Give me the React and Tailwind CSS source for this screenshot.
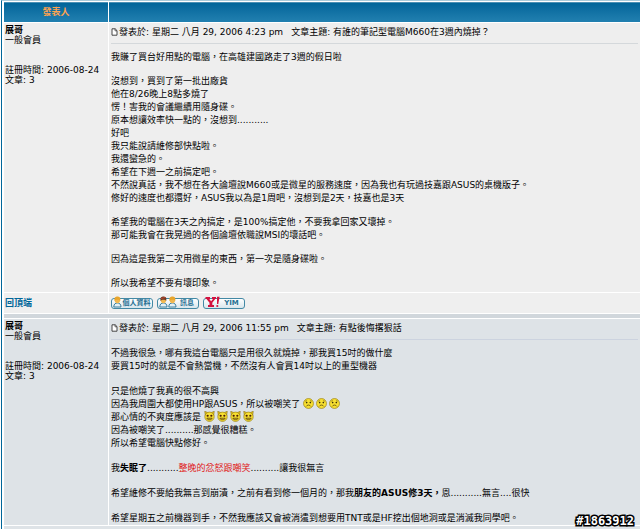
import React from 'react';

const posts = [
    {
        author: '展哥',
        rank: '一般會員',
        joined: '2006-08-24',
        count: 3,
        date: '星期二 八月 29, 2006 4:23 pm',
        subject: '有誰的筆記型電腦M660在3週內燒掉？',
        shade: 'bg-[#eeeeee]',
        rule: 'border-[#d4d8db]',
        gap: 'gap-[11px] pb-[2px]',
        body: [
            ['我賺了買台好用點的電腦，在高雄建國路走了3週的假日啦'],
            [
                '沒想到，買到了第一批出廠貨',
                '他在8/26晚上8點多燒了',
                '愣！害我的會議繼續用隨身碟。',
                '原本想讓效率快一點的，沒想到...........',
                '好吧',
                '我只能說請維修部快點啦。',
                '我還蠻急的。',
                '希望在下週一之前搞定吧。',
                '不然說真話，我不想在各大論壇說M660或是微星的服務速度，因為我也有玩過技嘉跟ASUS的桌機版子。',
                '修好的速度也都還好，ASUS我以為是1周吧，沒想到是2天，技嘉也是3天',
            ],
            [
                '希望我的電腦在3天之內搞定，是100%搞定他，不要我拿回家又壞掉。',
                '那可能我會在我晃過的各個論壇依職說MSI的壞話吧。',
            ],
            ['因為這是我第二次用微星的東西，第一次是隨身碟啦。'],
            ['所以我希望不要有壞印象。'],
        ],
    },
    {
        author: '展哥',
        rank: '一般會員',
        joined: '2006-08-24',
        count: 3,
        date: '星期二 八月 29, 2006 11:55 pm',
        subject: '有點後悔撂狠話',
        shade: 'bg-[#dee3e7]',
        rule: 'border-[#ccd3df]',
        gap: 'gap-[12px]',
        body: [
            [
                '不過我很急，哪有我這台電腦只是用很久就燒掉，那我買15吋的做什麼',
                '要買15吋的就是不會熱當機，不然沒有人會買14吋以上的重型機器',
            ],
            [
                '只是他燒了我真的很不高興',
                <>因為我周圍大都使用HP跟ASUS，所以被嘲笑了 <Smileys count={3} icon={SadFace} /></>,
                <>那心情的不爽度應該是 <Smileys count={4} icon={DevilFace} /></>,
                '因為被嘲笑了..........那感覺很糟糕。',
                '所以希望電腦快點修好。',
            ],
            [
                <>我<b>失眠了</b>...........<span className="text-[#e01818]">整晚的忿怒跟嘲笑</span>..........讓我很無言</>,
            ],
            [
                <>希望維修不要給我無言到崩潰，之前有看到修一個月的，那我<b>朋友的ASUS修3天，</b>恩...........無言....很快</>,
            ],
            ['希望星期五之前機器到手，不然我應該又會被消遣到想要用TNT或是HF挖出個地洞或是消滅我同學吧。'],
        ],
    },
];

function SadFace() {
    return (
        <svg viewBox="0 0 12 12" className="w-[11px] h-[11px]">
            <circle cx="6" cy="6" r="5.4" fill="#f8e030" stroke="#9c8418" strokeWidth="0.8" />
            <path d="M2.4 3.6l2-.8M9.6 3.6l-2-.8" stroke="#6b5a10" strokeWidth="0.6" />
            <circle cx="4" cy="5" r="0.9" fill="#3b3108" />
            <circle cx="8" cy="5" r="0.9" fill="#3b3108" />
            <path d="M3.5 9.2c1-2 4-2 5 0" fill="none" stroke="#5a4a0c" strokeWidth="0.9" />
        </svg>
    );
}

function DevilFace() {
    return (
        <svg viewBox="0 0 12 12" className="w-[11px] h-[11px]">
            <path d="M.8.3l3.600 1.500L1.400 5zM11.200.3L7.600 1.800 10.600 5z" fill="#e6c21c" stroke="#7c6814" strokeWidth="0.6" />
            <circle cx="6" cy="6.300" r="5.100" fill="#f8e030" stroke="#9c8418" strokeWidth="0.8" />
            <circle cx="4" cy="5.200" r="1.200" fill="#4a1c08" />
            <circle cx="8" cy="5.200" r="1.200" fill="#4a1c08" />
            <path d="M3 7.800c1 2.400 5 2.400 6 0z" fill="#c09c20" stroke="#4f3d08" strokeWidth="0.7" />
        </svg>
    );
}

function Smileys({ count, icon: Icon }) {
    return (
        <span className="inline-flex gap-[2px] align-middle h-[13px]">
            {Array.from({ length: count }, (_, i) => <Icon key={i} />)}
        </span>
    );
}

const PageIcon = () => (
    <svg viewBox="0 0 7 8" className="w-[7px] h-[8px] shrink-0">
        <path d="M1 .8h3.200L6 2.600v4.600H1z" fill="#fff" stroke="#333" strokeWidth="0.9" />
        <path d="M4 .8v2h2" fill="none" stroke="#333" strokeWidth="0.700" />
    </svg>
);

const Person = ({ x, hair }) => (
    <g transform={`translate(${x} 0)`}>
        <path d="M.8 11c0-3 1.600-4 3.600-4S8 8 8 11z" fill="#e3f0f6" stroke="#2b7596" strokeWidth="0.9" />
        <circle cx="4.400" cy="4.600" r="2.600" fill="#f0b850" />
        <path d="M1.500 5C1 1.200 2.700.6 4.400.6S7.800 1.200 7.300 5C6.500 3.400 2.700 3 1.500 5z" fill={hair} />
    </g>
);

const ProfileIcon = () => (
    <svg viewBox="0 0 9 12" className="w-[9px] h-[12px]">
        <Person x={0} hair="#e8a52c" />
    </svg>
);

const MessageIcon = () => (
    <svg viewBox="0 0 18 12" className="w-[18px] h-[12px]">
        <Person x={0} hair="#6b3a22" />
        <Person x={9} hair="#e8a52c" />
        <path d="M2 2.500l4.400-1" stroke="#c2442e" strokeWidth="1" />
    </svg>
);

const YahooIcon = () => (
    <svg viewBox="0 0 15 12" className="w-[15px] h-[12px]">
        <path d="M.5 1H5v2H4.300l1.800 2.200L8 3H7V1h4v2h-.8L7.300 6.700V9H9v2H3V9h1.500V6.700L1.500 3h-1z" fill="#d3123f" />
        <path d="M12 .8h2.600L13.300 8H12z" fill="#d3123f" />
        <circle cx="12.300" cy="10" r="1.100" fill="#d3123f" />
    </svg>
);

const contactButtons = [
    { label: '個人資料', icon: ProfileIcon },
    { label: '訊息', icon: MessageIcon },
    { label: 'YIM', icon: YahooIcon },
];

const ContactButton = ({ label, icon: Icon }) => (
    <button
        type="button"
        className="w-[42px] h-[11px] flex items-center justify-between rounded-[3px] border border-[#4389a5] bg-linear-to-b from-white to-[#d9e6ec] px-px text-[7px] leading-[9px] font-bold text-[#276f92] whitespace-nowrap"
    >
        <span className="-mt-[3px] shrink-0"><Icon /></span>
        <span className="grow text-center">{label}</span>
    </button>
);

const Post = ({ post }) => (
    <tr className={`${post.shade} align-top`}>
        <td className="px-px pt-[2px]">
            <div className="text-[9px] leading-[10px]">
                <p className="font-bold">{post.author}</p>
                <p>{post.rank}</p>
                <p className="mt-[20px]">註冊時間: {post.joined}</p>
                <p>文章: {post.count}</p>
            </div>
        </td>
        <td className="px-[2px]">
            <div className={`flex items-center h-[21px] pb-[2px] border-b ${post.rule} text-[9px] leading-[13px] whitespace-pre`}>
                <PageIcon />
                <span className="ml-px">發表於: {post.date}</span>
                <span className="ml-[8px]">文章主題: {post.subject}</span>
            </div>
            <div className={`flex flex-col pt-[7px] text-[9px] leading-[13px] ${post.gap}`}>
                {post.body.map((lines, i) => (
                    <div key={i}>
                        {lines.map((line, j) => <p key={j} className="h-[13px] whitespace-nowrap">{line}</p>)}
                    </div>
                ))}
            </div>
        </td>
    </tr>
);

export default function App() {
    return (
        <div className="relative overflow-hidden bg-white pl-px text-black font-['DejaVu_Sans','Noto_Sans_CJK_TC',sans-serif]">
            <div className="border-l border-[#006699] border-t border-t-[#a9cbdb] pl-px -mr-px">
                <table className="w-full table-fixed border-separate border-spacing-px">
                    <colgroup>
                        <col className="w-[104px]" />
                        <col />
                    </colgroup>
                    <thead>
                        <tr className="h-[20px] text-[9px] leading-[13px] text-[#ffa34f]">
                            <th className="bg-linear-to-b from-[#00659a] to-[#2180b0] border-t border-[#4a90b5] p-0">發表人</th>
                            <th className="bg-linear-to-b from-[#00659a] to-[#2180b0] border-t border-[#4a90b5] p-0" aria-label="文章" />
                        </tr>
                    </thead>
                    <tbody>
                        <Post post={posts[0]} />
                        <tr className="bg-[#efefef] h-[20px]">
                            <td className="px-px py-0 align-middle">
                                <a href="#top" className="block text-[9px] leading-[13px] font-bold text-[#006699]">回頂端</a>
                            </td>
                            <td className="px-[2px] py-0 align-middle">
                                <div className="flex gap-[4px]">
                                    {contactButtons.map((button) => <ContactButton key={button.label} {...button} />)}
                                </div>
                            </td>
                        </tr>
                        <tr className="h-[4px]">
                            <td colSpan={2} className="bg-[#d1d7dc] p-0" />
                        </tr>
                        <Post post={posts[1]} />
                        <tr className="h-[4px]">
                            <td colSpan={2} className="bg-[#dee3e7] p-0" />
                        </tr>
                    </tbody>
                </table>
            </div>
            <span className="absolute right-[6px] bottom-[3px] font-['DejaVu_Sans_Mono',monospace] text-[12px] leading-[14px] font-bold text-white [paint-order:stroke] [-webkit-text-stroke:3px_black]">
                #1863912
            </span>
        </div>
    );
}
